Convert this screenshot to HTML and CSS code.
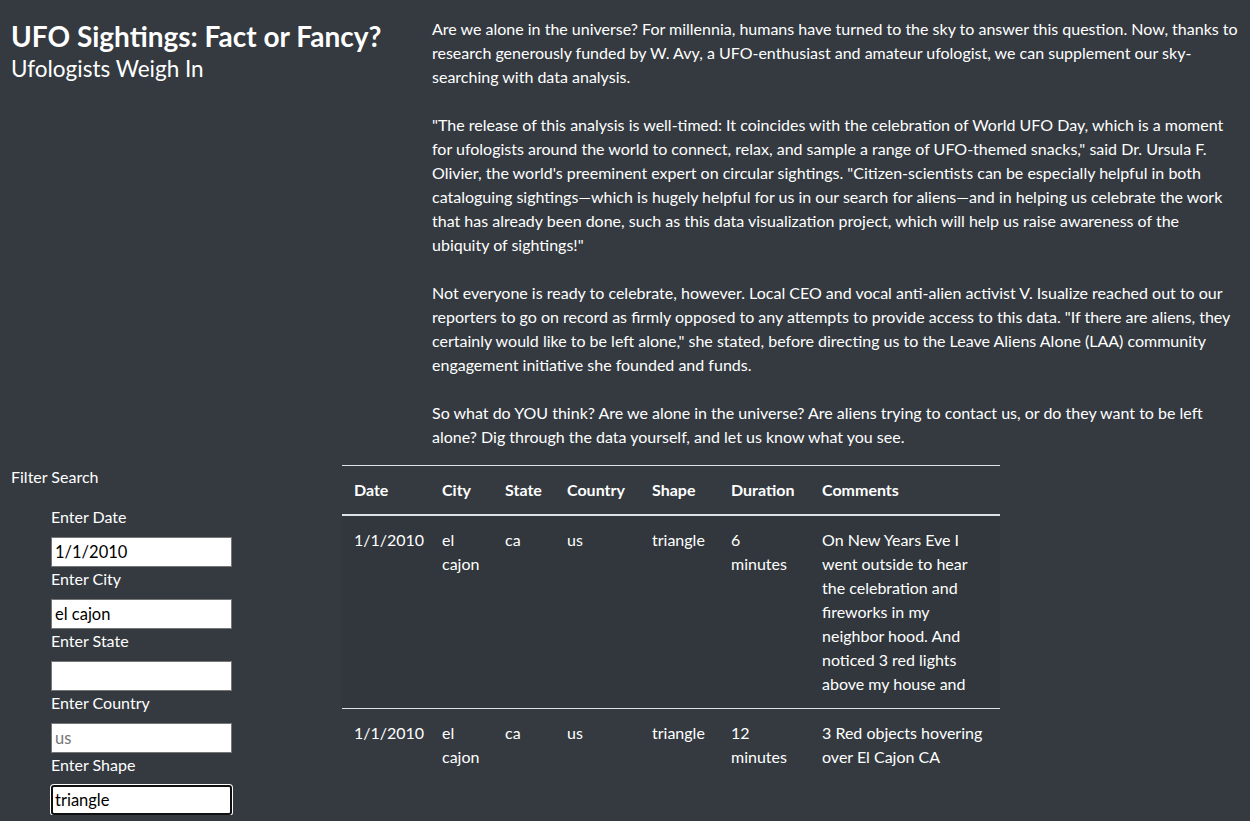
FILE: index.html
```html
<!DOCTYPE html>
<html lang="en">
<head>
  <meta charset="UTF-8">
  <meta name="viewport" content="width=device-width, initial-scale=1.0">
  <title>UFO Sightings</title>
  <link rel="stylesheet" href="styles.css">
</head>
<body>
  <div class="page">
    <header class="hero">
      <div class="hero-title">
        <h1>UFO Sightings: Fact or Fancy?</h1>
        <h2>Ufologists Weigh In</h2>
      </div>
      <div class="article">
        <p>Are we alone in the universe? For millennia, humans have turned to the sky to answer this question. Now, thanks to research generously funded by W. Avy, a UFO-enthusiast and amateur ufologist, we can supplement our sky-searching with data analysis.</p>
        <p>"The release of this analysis is well-timed: It coincides with the celebration of World UFO Day, which is a moment for ufologists around the world to connect, relax, and sample a range of UFO-themed snacks," said Dr. Ursula F. Olivier, the world's preeminent expert on circular sightings. "Citizen-scientists can be especially helpful in both cataloguing sightings—which is hugely helpful for us in our search for aliens—and in helping us celebrate the work that has already been done, such as this data visualization project, which will help us raise awareness of the ubiquity of sightings!"</p>
        <p>Not everyone is ready to celebrate, however. Local CEO and vocal anti-alien activist V. Isualize reached out to our reporters to go on record as firmly opposed to any attempts to provide access to this data. "If there are aliens, they certainly would like to be left alone," she stated, before directing us to the Leave Aliens Alone (LAA) community engagement initiative she founded and funds.</p>
        <p>So what do YOU think? Are we alone in the universe? Are aliens trying to contact us, or do they want to be left alone? Dig through the data yourself, and let us know what you see.</p>
      </div>
    </header>

    <main class="data">
      <aside class="filters">
        <div class="filters-title">Filter Search</div>
        <ul class="filter-list">
          <li>
            <label for="datetime">Enter Date</label>
            <input id="datetime" type="text" value="1/1/2010">
          </li>
          <li>
            <label for="city">Enter City</label>
            <input id="city" type="text" value="el cajon">
          </li>
          <li>
            <label for="state">Enter State</label>
            <input id="state" type="text">
          </li>
          <li>
            <label for="country">Enter Country</label>
            <input id="country" type="text" placeholder="us">
          </li>
          <li>
            <label for="shape">Enter Shape</label>
            <input id="shape" class="is-focused" type="text" value="triangle">
          </li>
        </ul>
      </aside>

      <section class="results">
        <table class="ufo-table">
          <colgroup>
            <col class="c-date"><col class="c-city"><col class="c-state"><col class="c-country">
            <col class="c-shape"><col class="c-duration"><col class="c-comments">
          </colgroup>
          <thead>
            <tr>
              <th>Date</th><th>City</th><th>State</th><th>Country</th><th>Shape</th><th>Duration</th><th>Comments</th>
            </tr>
          </thead>
          <tbody>
            <tr>
              <td>1/1/2010</td><td>el cajon</td><td>ca</td><td>us</td><td>triangle</td><td>6 minutes</td>
              <td>On New Years Eve I went outside to hear the celebration and fireworks in my neighbor hood. And noticed 3 red lights above my house and</td>
            </tr>
            <tr>
              <td>1/1/2010</td><td>el cajon</td><td>ca</td><td>us</td><td>triangle</td><td>12 minutes</td>
              <td>3 Red objects hovering over El Cajon CA</td>
            </tr>
          </tbody>
        </table>
      </section>
    </main>
  </div>
</body>
</html>
```

FILE: styles.css
```css
html, body { margin: 0; }
body {
  background: #343a40; color: #fff;
  font-family: 'Lato', 'Liberation Sans', sans-serif; font-size: 16px; line-height: 24px;
}
/* top: title + article */
.hero { display: flex; padding-top: 17px; }
.hero-title { width: 421px; padding-left: 11px; flex-shrink: 0; }
.hero-title h1 { margin: 2px 0 0; font-size: 28px; line-height: 34px; font-weight: 700; }
.hero-title h2 { margin: 1px 0 0; font-size: 22.5px; line-height: 30px; font-weight: 400; }
.article { width: 806px; }
.article p { margin: 0 0 24px; }
.article p:last-child { margin-bottom: 16px; }
/* bottom: filters + table */
.data { display: flex; }
.filters { width: 331px; padding-left: 11px; flex-shrink: 0; }
.filters-title { line-height: 24px; }
.filter-list { list-style: none; margin: 16px 0 0; padding-left: 40px; }
.filter-list label { display: block; margin-bottom: 8px; }
.filter-list input {
  display: block; box-sizing: border-box; width: 181px; height: 30px;
  padding: 0 3px 1px; border: 1px solid #767676; border-radius: 0;
  background: #fff; color: #000; outline: none;
  font-family: inherit; font-size: 16.5px;
}
.filter-list input::placeholder { color: #757575; }
.filter-list input.is-focused {
  border: 2px solid #101010; border-radius: 3px; padding: 0 2px;
  box-shadow: 0 0 0 1px #fff;
}
.results { width: 658px; }
.ufo-table { width: 658px; table-layout: fixed; border-collapse: collapse; }
.c-date { width: 88px; }
.c-city { width: 63px; }
.c-state { width: 62px; }
.c-country { width: 85px; }
.c-shape { width: 79px; }
.c-duration { width: 91px; }
.c-comments { width: 190px; }
.ufo-table th, .ufo-table td {
  padding: 12px; text-align: left; vertical-align: top;
  border-top: 1px solid #dee2e6;
}
.ufo-table th { font-weight: 700; vertical-align: bottom; border-bottom: 2px solid #dee2e6; }
.ufo-table tbody tr:first-child td { border-top: 0; }
.ufo-table tbody tr:nth-child(odd) { background: rgba(0,0,0,0.05); }
```
